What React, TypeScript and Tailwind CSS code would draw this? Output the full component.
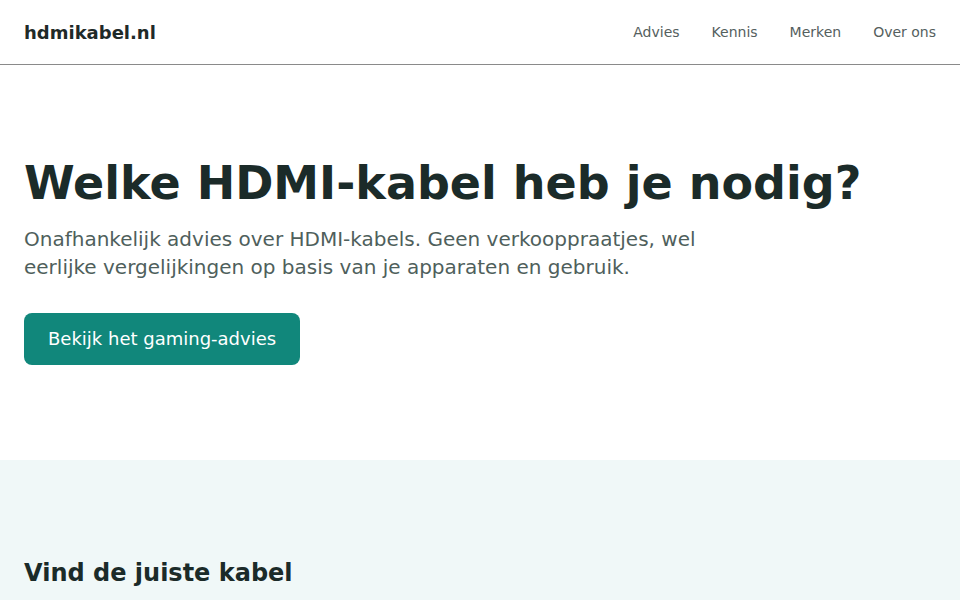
export default function App() {
  return (
    <div className="min-h-screen bg-white text-[#1b2b29]" style={{ fontFamily: '"DejaVu Sans", sans-serif' }}>
      <header className="h-[65px] border-b border-[#8a8a8a] flex items-center justify-between px-6">
        <div className="text-[18px] font-bold text-[#1f2a28]">hdmikabel.nl</div>
        <nav className="flex gap-8 text-[14px] text-[#55605e]">
          <a>Advies</a>
          <a>Kennis</a>
          <a>Merken</a>
          <a>Over ons</a>
        </nav>
      </header>
      <section className="px-6 pt-[93px] pb-[95px]">
        <h1 className="text-[46px] font-bold leading-[1.1] text-[#1b2b29]">Welke HDMI-kabel heb je nodig?</h1>
        <p className="mt-4 max-w-[720px] text-[20px] leading-[28px] text-[#4f5f5c]">
          Onafhankelijk advies over HDMI-kabels. Geen verkooppraatjes, wel eerlijke vergelijkingen op basis van je apparaten en gebruik.
        </p>
        <button className="mt-8 h-[52px] px-6 rounded-lg bg-[#11877b] text-white text-[18px]">Bekijk het gaming-advies</button>
      </section>
      <section className="bg-[#f0f8f8] px-6 pt-[95px] pb-24">
        <h2 className="text-[24px] font-bold text-[#1b2b29]">Vind de juiste kabel</h2>
      </section>
    </div>
  );
}
